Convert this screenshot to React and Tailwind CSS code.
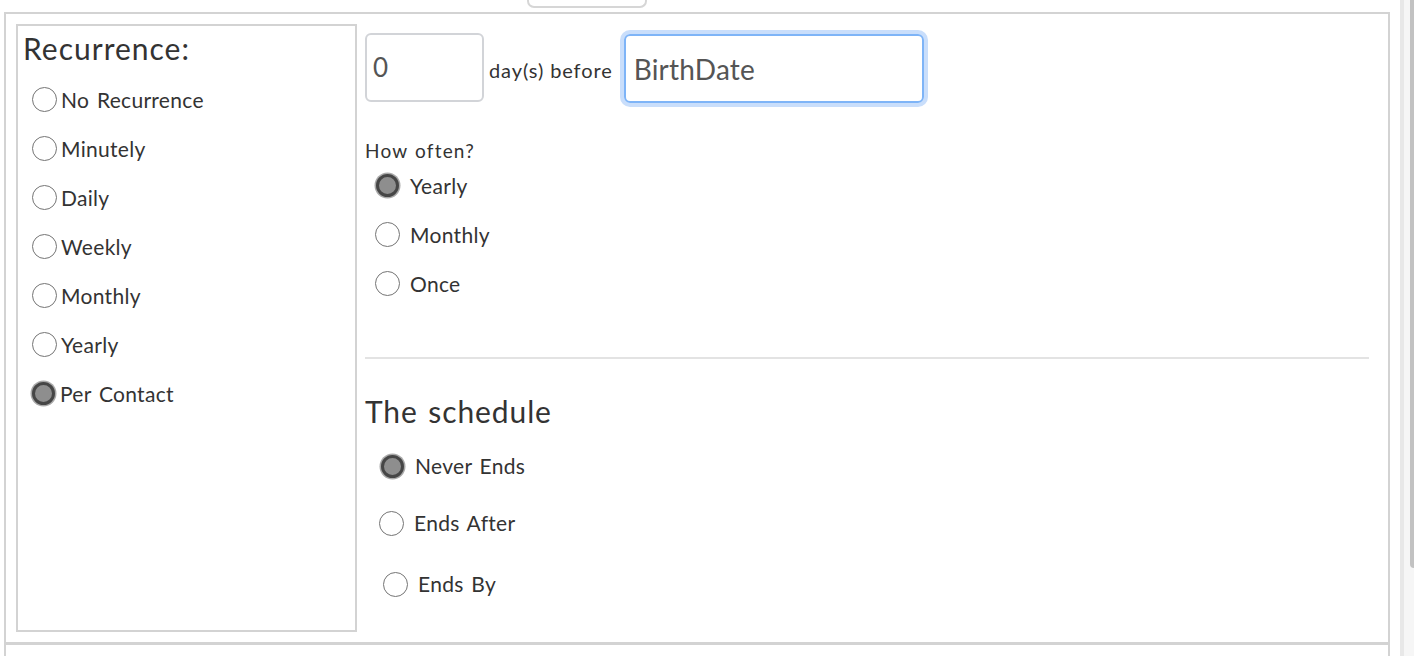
import React from "react";

const font = { fontFamily: "Lato, 'Open Sans', sans-serif" };

const Radio = ({ checked }) =>
  checked ? (
    <span className="box-border inline-block h-[23px] w-[23px] shrink-0 rounded-full border-[3px] border-[#464646] bg-[#8e8e8e] shadow-[0_0_0_1.5px_#a9a9a9]" />
  ) : (
    <span className="box-border inline-block h-[25px] w-[25px] shrink-0 rounded-full border-[1.5px] border-[#747474] bg-white" />
  );

const recurrenceOptions = [
  { label: "No Recurrence" },
  { label: "Minutely" },
  { label: "Daily" },
  { label: "Weekly" },
  { label: "Monthly" },
  { label: "Yearly" },
  { label: "Per Contact", checked: true },
];

const oftenOptions = [
  { label: "Yearly", checked: true },
  { label: "Monthly" },
  { label: "Once" },
];

export default function App() {
  return (
    <div className="flex h-[656px] w-full overflow-hidden bg-white text-[#333]" style={font}>
      <div className="w-[1400px] shrink-0">
        <div className="flex h-[12px] items-start">
          <div className="ml-[527px] h-[8px] w-[120px] rounded-b-[7px] border-x-2 border-b-2 border-[#d6d6d6]" />
        </div>

        <div className="ml-[4px] w-[1386px] border-x-2 border-t-2 border-b-[3px] border-[#d3d3d3] px-[10px] pt-[10px] pb-[10px]">
          <div className="flex gap-[8px]">
            <div className="h-[608px] w-[341px] shrink-0 border-2 border-[#d3d3d3] pt-[6px]">
              <h2 className="pl-[5px] text-[30px] leading-[32px] tracking-[1px] text-[#333]">Recurrence:</h2>
              <div className="mt-[11px]">
                {recurrenceOptions.map((option) => (
                  <label key={option.label} className="flex h-[49px] items-center gap-[4px] pl-[14px] text-[21px] tracking-[0.3px] [word-spacing:2px]">
                    <Radio checked={option.checked} />
                    <span className={option.checked ? "ml-[1px]" : ""}>{option.label}</span>
                  </label>
                ))}
              </div>
            </div>

            <div className="flex-1 pr-[9px]">
              <div className="mt-[9px] flex items-start">
                <div className="flex h-[69px] w-[119px] items-center rounded-[6px] border-2 border-[#d2d4d8] pl-[6px] text-[26px] text-[#555]">0</div>
                <span className="ml-[5px] mt-[24px] text-[20px] leading-[26px] tracking-[0.9px]">day(s) before</span>
                <div className="ml-[11px] mt-[1px] flex h-[69px] w-[300px] items-center rounded-[6px] border-2 border-[#7eb4f7] pl-[8px] text-[28px] tracking-[0.2px] text-[#555] shadow-[0_0_0_4px_#c9defb]">
                  BirthDate
                </div>
              </div>

              <p className="mt-[38px] text-[19px] leading-[20px] tracking-[1.2px] [word-spacing:1px]">How often?</p>
              <div>
                {oftenOptions.map((option) => (
                  <label key={option.label} className="flex h-[49px] items-center gap-[10px] pl-[10px] text-[21px] tracking-[0.3px]">
                    <span className="flex w-[25px] justify-center">
                      <Radio checked={option.checked} />
                    </span>
                    <span>{option.label}</span>
                  </label>
                ))}
              </div>

              <div className="mt-[49px] h-[2px] w-full bg-[#e3e3e3]" />

              <h3 className="mt-[34px] text-[30px] leading-[36px] tracking-[0.9px] [word-spacing:2px]">The schedule</h3>

              <label className="mt-[17px] flex h-[40px] items-center gap-[10px] pl-[15px] text-[21px] tracking-[0.3px] [word-spacing:2px]">
                <span className="flex w-[25px] justify-center">
                  <Radio checked />
                </span>
                <span>Never Ends</span>
              </label>
              <label className="mt-[17px] flex h-[40px] items-center gap-[10px] pl-[14px] text-[21px] tracking-[0.3px] [word-spacing:2px]">
                <Radio />
                <span>Ends After</span>
              </label>
              <label className="mt-[21px] flex h-[40px] items-center gap-[10px] pl-[18px] text-[21px] tracking-[0.3px] [word-spacing:2px]">
                <Radio />
                <span>Ends By</span>
              </label>
            </div>
          </div>
        </div>

        <div className="ml-[4px] h-[20px] w-[1386px] border-x-2 border-[#d3d3d3]" />
      </div>

      <div className="flex h-full w-[14px] shrink-0 border-l-4 border-[#e8e8e8] bg-[#f6f6f6]">
        <div className="ml-auto h-[568px] w-[4px] rounded-bl-[4px] bg-[#c2c2c2]" />
      </div>
    </div>
  );
}
